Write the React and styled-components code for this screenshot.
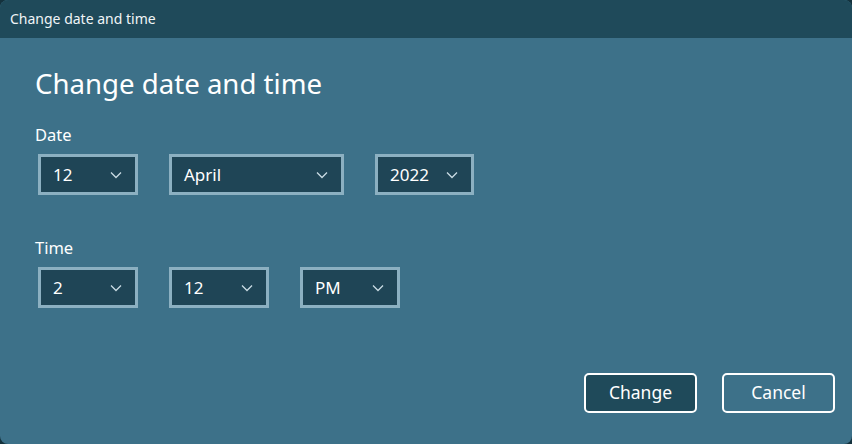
import React from "react";
import styled, { createGlobalStyle } from "styled-components";

const Global = createGlobalStyle`
  html, body { margin: 0; padding: 0; background: #14323d; }
  body { font-family: "Segoe UI", "Noto Sans", "Open Sans", sans-serif; }
  * { box-sizing: border-box; }
`;

const Window = styled.div`
  width: 852px;
  height: 444px;
  background: #3d7189;
  border-radius: 8px;
  overflow: hidden;
  display: flex;
  flex-direction: column;
  color: #fff;
`;

const TitleBar = styled.div`
  height: 38px;
  background: #1f4a5a;
  display: flex;
  align-items: center;
  padding: 0 10px 1px;
  font-size: 14px;
  color: #f0f5f7;
`;

const Content = styled.div`
  flex: 1;
  display: flex;
  flex-direction: column;
  padding: 25px 17px 31px 35px;
`;

const Heading = styled.h1`
  margin: 0;
  font-weight: 400;
  font-size: 27.6px;
  line-height: 40px;
`;

const Label = styled.div`
  font-size: 16.5px;
  line-height: 22px;
  margin-top: ${(p) => p.$top}px;
  margin-bottom: 8px;
`;

const Row = styled.div`
  display: flex;
  gap: 31px;
  padding-left: 3px;
`;

const Select = styled.div`
  width: ${(p) => p.$w}px;
  height: 41px;
  background: #1f4556;
  border: 3px solid #8cb0c1;
  display: flex;
  align-items: center;
  justify-content: space-between;
  padding: 0 13px 0 12px;
  font-size: 17px;
  color: #fff;
`;

const Chevron = () => (
  <svg width="12" height="8" viewBox="0 0 12 8" fill="none">
    <path d="M1 1.5 L6 6.5 L11 1.5" stroke="#c9dbe3" strokeWidth="1.3" />
  </svg>
);

const Spacer = styled.div`
  flex: 1;
`;

const Buttons = styled.div`
  display: flex;
  justify-content: flex-end;
  gap: 25px;
`;

const Button = styled.button`
  width: 113px;
  height: 40px;
  border: 2.5px solid #ffffff;
  border-radius: 5px;
  background: ${(p) => (p.$primary ? "#1f4a5a" : "#3d7189")};
  color: #fff;
  font-family: inherit;
  font-size: 17.5px;
  padding: 0 0 2px;
`;

const Dropdown = ({ w, value }) => (
  <Select $w={w}>
    <span>{value}</span>
    <Chevron />
  </Select>
);

export default function App() {
  return (
    <Window>
      <Global />
      <TitleBar>Change date and time</TitleBar>
      <Content>
        <Heading>Change date and time</Heading>
        <Label $top={21}>Date</Label>
        <Row>
          <Dropdown w={100} value="12" />
          <Dropdown w={175} value="April" />
          <Dropdown w={99} value="2022" />
        </Row>
        <Label $top={42}>Time</Label>
        <Row>
          <Dropdown w={100} value="2" />
          <Dropdown w={100} value="12" />
          <Dropdown w={100} value="PM" />
        </Row>
        <Spacer />
        <Buttons>
          <Button $primary>Change</Button>
          <Button>Cancel</Button>
        </Buttons>
      </Content>
    </Window>
  );
}
